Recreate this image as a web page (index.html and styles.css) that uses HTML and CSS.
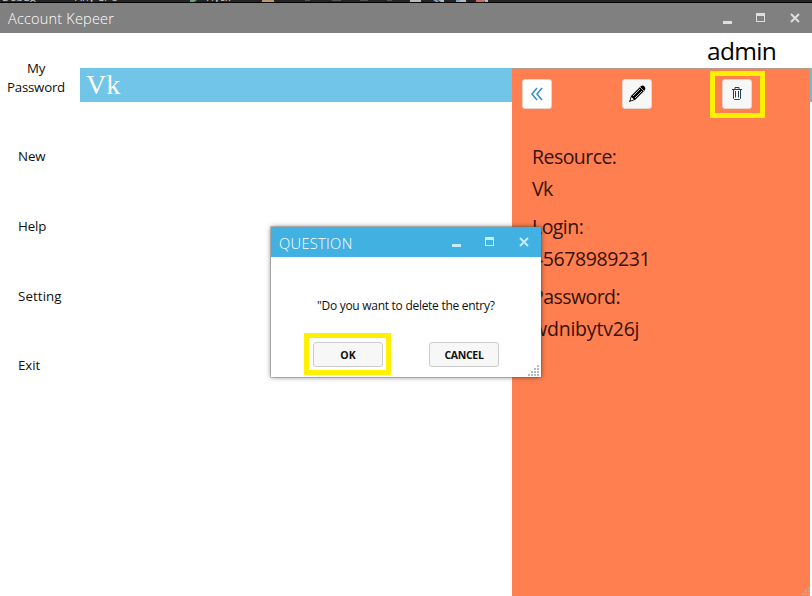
FILE: index.html
```html
<!DOCTYPE html>
<html lang="en">
<head>
<meta charset="utf-8">
<title>Account Kepeer</title>
<link rel="stylesheet" href="styles.css">
</head>
<body>
<div class="app">
  <div class="backdrop" aria-hidden="true">
    <span class="crumb debug">Debug</span><span class="crumb cpu">Any CPU</span><span class="crumb run">Пуск</span>
    <svg class="tools" width="812" height="3" viewBox="0 0 812 3"><path fill="#65a572" d="M190 0h7l-3 2h-4z"/><path fill="#bd9b68" d="M262 0h12v2h-12z"/><path fill="#555" d="M305 0h5v1h-5zM332 0h9v1h-9zM360 0h8v1h-8zM387 0h5v1h-5z"/><path fill="#bbb" d="M410 0h11v2h-11zM438 0h6v2h-3zM460 0h6v2h-9z"/><path fill="#6ca8d8" d="M433 0h4l2 2h-3zM456 0h4l-2 2h-2z"/><path fill="#d06c5c" d="M476 0h8v2h-8z"/><path fill="#bbb" d="M484 0h4v2h-3z"/></svg>
  </div>
  <header class="titlebar">
    <h1 class="title">Account Kepeer</h1>
    <svg class="winctl" width="80" height="14" viewBox="0 0 80 14"><path fill="#dedede" d="M1 10h9v3H1z"/><path fill="#dedede" fill-rule="evenodd" d="M34 2h9v9h-9zM35 5v5h7V5z"/><path d="M69 3l8 8M77 3l-8 8" stroke="#dedede" stroke-width="2"/></svg>
  </header>
  <div class="body">
    <nav class="nav">
      <a class="item first">My<br>Password</a>
      <a class="item">New</a>
      <a class="item">Help</a>
      <a class="item setting">Setting</a>
      <a class="item">Exit</a>
    </nav>
    <main class="main">
      <div class="user"><span>admin</span></div>
      <div class="content">
        <div class="list"><div class="entry">Vk</div></div>
        <aside class="panel">
          <div class="actions">
            <button class="icon-btn back"><svg width="28" height="28" viewBox="0 0 28 28" fill="none" stroke="#318fc4" stroke-width="1.5"><path d="M14 8l-5 6 5 6M19 8l-5 6 5 6"/></svg></button>
            <button class="icon-btn edit"><svg width="28" height="28" viewBox="0 0 28 28"><path d="M6 22l2-6 9-9 4 4-9 9z"/><path d="M18 6q2-1 3.500.5T22 10l-1 1-4-4z"/><path d="M10 16l7-7M12 18l7-7" stroke="#f7f7f7" stroke-width=".8"/><path d="M8.500 17l2.500 2.500-3 1-.5-.5z" fill="#eee"/><path d="M17 7l4 4" stroke="#ddd" stroke-width=".7"/></svg></button>
            <div class="mark mark-trash"><button class="icon-btn trash"><svg width="28" height="28" viewBox="0 0 28 28" fill="none" stroke="#244257"><path d="M9 9.500h10M12 9V7.500h4V9M10.500 9v9.500l1 1h5l1-1V9M12.500 11v6.500M15.500 11v6.500"/></svg></button></div>
          </div>
          <dl class="details">
            <dt>Resource:</dt><dd>Vk</dd>
            <dt>Login:</dt><dd class="digits">45678989231</dd>
            <dt>Password:</dt><dd class="secret">wdnibytv26j</dd>
          </dl>
        </aside>
        <div class="edge"></div>
      </div>
    </main>
  </div>
  <svg class="app-grip" width="9" height="9" viewBox="0 0 9 9" fill="#d1a18e"><path d="M6 0h2v2H6zM3 3h2v2H3zM6 3h2v2H6zM0 6h2v2H0zM3 6h2v2H3zM6 6h2v2H6z"/></svg>

  <section class="dialog" role="dialog">
    <header class="dialog-bar">
      <h2 class="dialog-title">QUESTION</h2>
      <svg class="winctl" width="80" height="14" viewBox="0 0 80 14"><path fill="#c5ecfa" d="M1 9h9v3H1z"/><path fill="#c5ecfa" fill-rule="evenodd" d="M34 2h9v9h-9zM35 5v5h7V5z"/><path d="M69 3l8 8M77 3l-8 8" stroke="#c5ecfa" stroke-width="2"/></svg>
    </header>
    <p class="message"><span>"Do you want to delete the entry?</span></p>
    <div class="buttons">
      <div class="mark"><button class="btn">OK</button></div>
      <button class="btn cancel">CANCEL</button>
    </div>
    <svg class="grip" width="11" height="11" viewBox="0 0 11 11" fill="#b4bac0"><path d="M9 0h2v2H9zM6 3h2v2H6zM9 3h2v2H9zM3 6h2v2H3zM6 6h2v2H6zM9 6h2v2H9zM0 9h2v2H0zM3 9h2v2H3zM6 9h2v2H6zM9 9h2v2H9z"/></svg>
  </section>
</div>
</body>
</html>
```
FILE: styles.css
```css
* { box-sizing: border-box; }
body, h1, h2, p, dl, dd { margin: 0; }
body { overflow: hidden; background: #fff; color: #101010; font-family: "Open Sans", "Noto Sans", sans-serif; }
button { font: inherit; color: inherit; padding: 0; }

.app { position: relative; display: flex; flex-direction: column; width: 812px; height: 596px; overflow: hidden; }
.backdrop { position: relative; height: 3px; background: #242426; border-bottom: 1px solid #000; overflow: hidden; }
.crumb { position: absolute; top: -10px; font-size: 11px; line-height: 14px; color: #ccc; }
.debug { left: 2px; }
.cpu { left: 75px; }
.run { left: 206px; }
.tools { position: absolute; left: 0; top: 0; }

.titlebar { display: flex; justify-content: space-between; height: 30px; padding: 8px 10px 0 8px; background: #808080; }
.title { font-size: 14.5px; line-height: 16px; font-weight: 300; color: #fff; letter-spacing: .2px; }
.winctl { display: block; flex: none; }

.body { display: flex; flex: 1; }
.nav { width: 80px; padding-top: 26px; font-size: 13.3px; line-height: 19px; letter-spacing: -.1px; }
.item { display: block; height: 70px; padding-left: 18px; }
.item.first { height: 88px; padding: 0 8px 0 0; text-align: center; letter-spacing: -.25px; }
.item.setting { height: 69px; letter-spacing: .1px; }
.main { flex: 1; display: flex; flex-direction: column; }
.user { height: 35px; padding-right: 36px; text-align: right; font-size: 24.5px; line-height: 36px; color: #000; letter-spacing: -.7px; }
.content { display: flex; flex: 1; }
.list { width: 432px; }
.entry { height: 34px; padding-left: 6px; background: #71c5e8; color: #fff; font: 28px/33px "Liberation Serif", serif; }
.panel { width: 298px; padding-left: 10px; background: #ff7f50; border-top: 1px solid #b99a8b; }
.edge { flex: 1; height: 34px; background: #7fb7cb; }

.actions { display: flex; height: 72px; padding-top: 10px; }
.icon-btn { display: block; width: 30px; height: 30px; margin-right: 70px; background: #f7f7f7; border: 1px solid #e9d5cc; border-radius: 3px; }
.icon-btn svg { display: block; }
.back { background: #fff; }
.details { padding-left: 10px; font-size: 19.5px; line-height: 32px; letter-spacing: -.55px; color: #35120a; }
.details dd { margin-bottom: 6px; }
.details .digits { letter-spacing: -.4px; }
.details .secret { letter-spacing: -.2px; }

.dialog { position: absolute; left: 271px; top: 227px; width: 270px; height: 150px; background: #fff; box-shadow: 0 0 0 1px rgba(100,100,100,.3), 0 0 5px rgba(0,0,0,.55); }
.dialog-bar { display: flex; justify-content: space-between; height: 30px; padding: 8px 10px 0 8px; background: #41b1e1; }
.dialog-title { font-size: 14.7px; line-height: 16px; font-weight: 300; color: #fff; letter-spacing: .3px; }
.message { height: 76px; padding: 40px 0 0 46px; font-size: 12px; line-height: 18px; letter-spacing: -.28px; }
.buttons { display: flex; padding-left: 33px; }
.mark { width: 87px; height: 42px; padding: 4px; border: 5px solid #fff000; }
.mark-trash { flex: none; width: 55px; height: 47px; margin: -8px 0 0 -12px; padding: 3px 0 0 7px; }
.btn { display: block; width: 70px; height: 25px; background: #f7f7f7; border: 1px solid #ccc; border-radius: 3px; font-size: 10.5px; line-height: 24px; font-weight: 700; color: #111; }
.cancel { margin: 9px 0 0 38px; letter-spacing: -.3px; }
.grip { position: absolute; right: 2px; bottom: 1px; }
.app-grip { position: absolute; right: 1px; bottom: 0; }
```
